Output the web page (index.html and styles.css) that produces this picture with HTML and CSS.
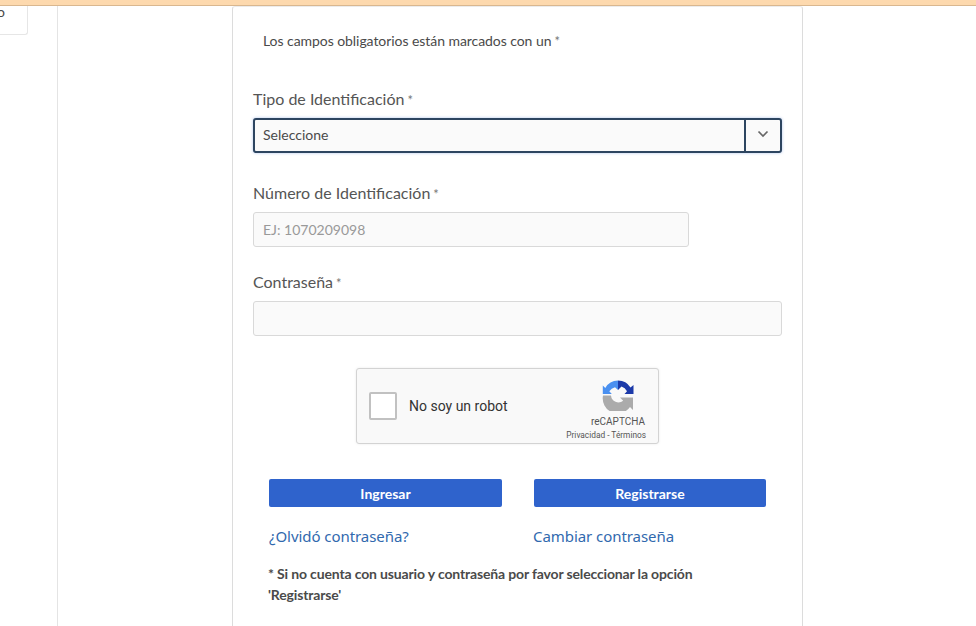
FILE: index.html
```html
<!DOCTYPE html>
<html lang="es">
<head>
<meta charset="utf-8">
<title>Ingreso</title>
<link rel="stylesheet" href="styles.css">
</head>
<body>
<div class="topbar"></div>
<div class="page">
  <div class="stub"><span class="stub-text">o</span></div>
  <div class="outer">
    <form class="card">
      <p class="required-note">Los campos obligatorios están marcados con un<span class="star">*</span></p>
      <div class="field field-type">
        <label class="label">Tipo de Identificación<span class="star">*</span></label>
        <div class="select">
          <span class="select-value">Seleccione</span>
          <span class="select-arrow">
            <svg width="12" height="8" viewBox="0 0 12 8"><path d="M1.500 1.500 6 6l4.500-4.500" fill="none" stroke="#666" stroke-width="1.700"/></svg>
          </span>
        </div>
      </div>
      <div class="field field-number">
        <label class="label">Número de Identificación<span class="star">*</span></label>
        <div class="input input-short"><span class="placeholder">EJ: 1070209098</span></div>
      </div>
      <div class="field field-pass">
        <label class="label">Contraseña<span class="star">*</span></label>
        <div class="input"></div>
      </div>
      <div class="captcha-row">
        <div class="captcha">
          <span class="captcha-box"></span>
          <span class="captcha-text">No soy un robot</span>
          <div class="captcha-brand">
            <svg class="captcha-logo" width="32" height="32" viewBox="0 0 32 32">
              <path d="M16 1.500A14.500 14.500 0 0 0 3.300 9L.8 6.500V15h9l-2.500-2.700A9.500 9.500 0 0 1 13 8.300L16 11z" fill="#4a90f0"/>
              <path d="M16 1.500A14.500 14.500 0 0 1 28.500 8.500L31.500 6V15h-9l2.500-2.800A9.800 9.800 0 0 0 19.500 7.500L16 11z" fill="#1c3aa9"/>
              <path d="M1 16.500h8a7.500 7.500 0 0 0 12.200 5.200L18 18.500h13V31l-3-3A15 15 0 0 1 1 16.500z" fill="#ababab"/>
            </svg>
            <span class="captcha-name">reCAPTCHA</span>
            <span class="captcha-links">Privacidad - Términos</span>
          </div>
        </div>
      </div>
      <div class="actions">
        <button class="btn" type="button">Ingresar</button>
        <button class="btn" type="button">Registrarse</button>
      </div>
      <div class="links">
        <a class="link" href="#">¿Olvidó contraseña?</a>
        <a class="link" href="#">Cambiar contraseña</a>
      </div>
      <p class="hint">* Si no cuenta con usuario y contraseña por favor seleccionar la opción 'Registrarse'</p>
    </form>
  </div>
</div>
</body>
</html>
```
FILE: styles.css
```css
* { box-sizing: border-box; }
html, body { margin: 0; height: 100%; overflow: hidden; }
body { background: #fff; color: #4a4a4a; font-family: Lato, "Liberation Sans", sans-serif; }
.topbar { height: 6px; background: #fdd9ae; border-bottom: 1px solid #d9b78f; }
.page { display: flex; height: 620px; }
.stub {
  width: 28px; height: 29px; flex: none;
  background: #fff; border: 1px solid #e6e6e6; border-left: 0; border-top: 0;
  border-radius: 0 0 3px 0; overflow: hidden;
}
.stub-text { display: block; margin: -2px 0 0 -3px; font-size: 14px; line-height: 16px; }
.outer { margin-left: 29px; border-left: 1px solid #e4e4e4; padding: 0 0 0 174px; width: 746px; height: 100%; }
.card {
  width: 571px; height: 100%;
  border: 1px solid #dcdcdc; border-bottom: 0; border-top-color: #ececec; border-radius: 3px 3px 0 0;
  padding: 25px 20px 0 20px;
}
.required-note { margin: 0 0 0 10px; font-size: 14px; line-height: 18px; letter-spacing: -0.06px; color: #4a4a4a; }
.star { color: #777; font-size: 13px; margin-left: 3px; }
.field { display: flex; flex-direction: column; }
.field-type { margin-top: 39px; }
.field-number { margin-top: 30px; }
.field-pass { margin-top: 25px; }
.label { font-size: 16px; line-height: 20px; height: 20px; color: #555; }
.select {
  margin-top: 9px; height: 35px; display: flex; align-items: stretch;
  background: #fafafa; border: 2px solid #2d4560; border-radius: 3px;
  box-shadow: 0 0 3px rgba(70,120,210,.45);
}
.select-value { flex: 1; padding-left: 8px; font-size: 14px; line-height: 29px; color: #4a4a4a; }
.select-arrow { width: 36px; padding-bottom: 3px; border-left: 2px solid #2d4560; display: flex; align-items: center; justify-content: center; }
.input { margin-top: 9px; height: 35px; background: #fafafa; border: 1px solid #d9d9d9; border-radius: 3px; padding-left: 9px; }
.input-short { width: 436px; }
.placeholder { font-size: 14px; line-height: 33px; color: #999; }
.captcha-row { display: flex; justify-content: center; margin-top: 32px; padding-right: 20px; }
.captcha {
  width: 303px; height: 76px; display: flex; align-items: center;
  background: #f9f9f9; border: 1px solid #d3d3d3; border-radius: 3px;
  box-shadow: 0 0 3px rgba(0,0,0,.08); font-family: Roboto, sans-serif;
}
.captcha-box { width: 28px; height: 28px; margin-left: 12px; background: #fff; border: 2px solid #c1c1c1; border-radius: 2px; flex: none; }
.captcha-text { margin-left: 12px; font-size: 14px; color: #333; }
.captcha-brand { margin-left: auto; margin-right: 12px; display: flex; flex-direction: column; align-items: flex-end; padding-top: 7px; }
.captcha-logo { display: block; margin-right: 12px; }
.captcha-name { font-size: 10px; line-height: 12px; margin-top: 5px; margin-right: 1px; color: #555; }
.captcha-links { font-size: 8.300px; line-height: 10px; margin-top: 2px; color: #555; white-space: nowrap; }
.actions { display: flex; gap: 32px; margin-top: 35px; padding-left: 16px; }
.btn {
  width: 233px; height: 28px; padding: 0; border: 0; border-radius: 2px;
  background: #2f63cc; color: #fff; font: 700 14px Lato, sans-serif;
}
.btn + .btn { width: 232px; }
.links { display: flex; margin-top: 18px; padding-left: 16px; height: 22px; }
.link { flex: none; width: 264px; font-family: "Noto Sans", sans-serif; font-size: 15px; line-height: 22px; letter-spacing: -0.06px; color: #3169ae; text-decoration: none; }
.hint { margin: 16px 0 0 15px; font-size: 14px; line-height: 21px; letter-spacing: -0.15px; font-weight: 700; color: #4a4a4a; width: 480px; }
```
